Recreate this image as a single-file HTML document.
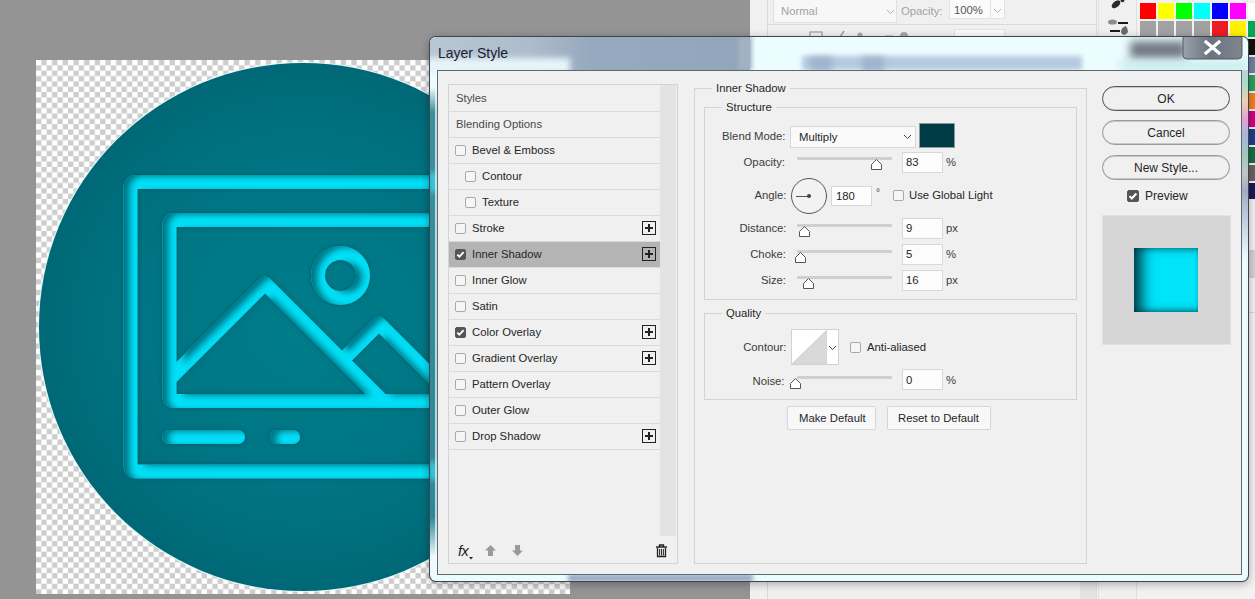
<!DOCTYPE html>
<html><head><meta charset="utf-8"><title>Layer Style</title>
<style>
*{margin:0;padding:0;box-sizing:border-box}
html,body{width:1255px;height:599px;overflow:hidden}
body{background:#949494;font-family:"Liberation Sans",sans-serif;position:relative;color:#333}
.a{position:absolute}
#canvas{left:36px;top:60px;width:534px;height:534px;background-color:#fff;
background-image:conic-gradient(#cdcdcd 25%,#fff 25% 50%,#cdcdcd 50% 75%,#fff 75%);
background-size:10.69px 10.69px;background-position:0 0}
.t{position:absolute;white-space:nowrap;font-size:12px;line-height:14px}
.lt{font-size:11.3px;line-height:16px}
.cbx{width:11px;height:11px;border:1px solid #a9a9a9;border-radius:2px;background:#f6f6f6}
.cbx.on{background:#555;border-color:#555}
.cbx svg{position:absolute;left:-1px;top:-1px}
.plus{width:14px;height:14px;border:1px solid #222;background:transparent}
.plus:before{content:"";position:absolute;left:2px;top:5px;width:8px;height:2px;background:#222}
.plus:after{content:"";position:absolute;left:5px;top:2px;width:2px;height:8px;background:#222}
.grp{border:1px solid #d3d3d3}
.hdr{background:#f0f0f0;padding:0 4px;color:#262626}
.ddl{background:#fafafa;border:1px solid #d8d8d8}
.inp{background:#fcfcfc;border:1px solid #d8d8d8}
.trk{height:3px;background:#cfcfcf;border-radius:1px}
.btn{background:#f8f8f8;border:1px solid #d6d6d6;border-radius:2px}
.rbtn{background:#f0f0f0;border:1px solid #9a9a9a;border-radius:13px;box-shadow:inset 0 1px 0 #c8c8c8,inset 0 -1px 0 #c8c8c8}
</style></head><body>
<!-- PS PANELS -->
<div class="a" style="left:750px;top:0;width:505px;height:599px;background:#f0f0f0"></div>
<div class="a" style="left:767px;top:0;width:1px;height:599px;background:#d9d9d9"></div>
<div class="a" style="left:773px;top:-1px;width:124px;height:24px;background:#f7f7f7;border:1px solid #e0e0e0"></div>
<div class="t" style="left:781px;top:4px;font-size:11.3px;line-height:14px;color:#a3a3a3">Normal</div>
<svg class="a" style="left:886px;top:9px" width="9" height="6"><path d="M1 1 L4.5 4.5 L8 1" fill="none" stroke="#b0b0b0" stroke-width="1"/></svg>
<div class="t" style="left:901px;top:4px;font-size:11.3px;line-height:14px;color:#a3a3a3">Opacity:</div>
<div class="a" style="left:949px;top:-1px;width:56px;height:20px;background:#fbfbfb;border:1px solid #e3e3e3"></div>
<div class="a" style="left:990px;top:0;width:1px;height:19px;background:#e3e3e3"></div>
<div class="t" style="left:954px;top:3px;font-size:11.3px;line-height:14px;color:#555">100%</div>
<svg class="a" style="left:993px;top:8px" width="9" height="6"><path d="M1 1 L4.5 4.5 L8 1" fill="none" stroke="#b0b0b0" stroke-width="1"/></svg>
<div class="a" style="left:767px;top:24px;width:330px;height:1px;background:#d9d9d9"></div>
<div class="a" style="left:954px;top:29px;width:51px;height:10px;background:#fbfbfb;border:1px solid #e3e3e3"></div>
<div class="a" style="left:1096px;top:0;width:1px;height:599px;background:#dcdcdc"></div>
<div class="a" style="left:1098px;top:0;width:1px;height:599px;background:#e4e4e4"></div>
<div class="a" style="left:1080px;top:560px;width:16px;height:39px;background:#e4e4e4"></div>
<div class="a" style="left:1136px;top:0;width:1px;height:599px;background:#dedede"></div>
<div class="a" style="left:1138px;top:0;width:1px;height:599px;background:#e2e2e2"></div>
<!-- tool icons -->
<svg class="a" style="left:1105px;top:0" width="30" height="36"><ellipse cx="11" cy="4.3" rx="5" ry="3" transform="rotate(-40 11 4.3)" fill="#2a2a2a"/><circle cx="17.5" cy="0.3" r="2" fill="#2a2a2a"/><ellipse cx="7.5" cy="22" rx="4.5" ry="2.6" fill="#8c8c8c"/><rect x="13" y="22" width="10" height="2" fill="#1a1a1a"/><rect x="5" y="30" width="10" height="2" fill="#1a1a1a"/><path d="M16 31 Q17 27 21 26 Q23 29 23 32 Q21 35 19 35 Q16 34 16 31Z" fill="#6a6a6a"/></svg>
<!-- swatches -->
<div class="a" style="left:1137px;top:0;width:118px;height:599px;background:#f2f2f2"></div>
<div class="a" style="left:1140px;top:3px;width:16px;height:16px;background:#ff0000"></div>
<div class="a" style="left:1158px;top:3px;width:16px;height:16px;background:#ffff00"></div>
<div class="a" style="left:1176px;top:3px;width:16px;height:16px;background:#00ff00"></div>
<div class="a" style="left:1194px;top:3px;width:16px;height:16px;background:#00ffff"></div>
<div class="a" style="left:1212px;top:3px;width:16px;height:16px;background:#0000ff"></div>
<div class="a" style="left:1230px;top:3px;width:16px;height:16px;background:#ff00ff"></div>
<div class="a" style="left:1248px;top:3px;width:16px;height:16px;background:#ffffff"></div>
<div class="a" style="left:1140px;top:21px;width:16px;height:16px;background:#a2a2a2"></div>
<div class="a" style="left:1158px;top:21px;width:16px;height:16px;background:#a2a2a2"></div>
<div class="a" style="left:1176px;top:21px;width:16px;height:16px;background:#a2a2a2"></div>
<div class="a" style="left:1194px;top:21px;width:16px;height:16px;background:#a0a0a0"></div>
<div class="a" style="left:1212px;top:21px;width:16px;height:16px;background:#ed1c24"></div>
<div class="a" style="left:1230px;top:21px;width:16px;height:16px;background:#fff200"></div>
<div class="a" style="left:1248px;top:21px;width:16px;height:16px;background:#00a651"></div>
<div class="a" style="left:1248px;top:39px;width:16px;height:16px;background:#111111"></div>
<div class="a" style="left:1248px;top:57px;width:16px;height:16px;background:#6f80a8"></div>
<div class="a" style="left:1248px;top:75px;width:16px;height:16px;background:#26a060"></div>
<div class="a" style="left:1248px;top:93px;width:16px;height:16px;background:#f08020"></div>
<div class="a" style="left:1248px;top:111px;width:16px;height:16px;background:#d0008a"></div>
<div class="a" style="left:1248px;top:129px;width:16px;height:16px;background:#1b3f86"></div>
<div class="a" style="left:1248px;top:147px;width:16px;height:16px;background:#107040"></div>
<div class="a" style="left:1248px;top:165px;width:16px;height:16px;background:#6a6460"></div>
<div class="a" style="left:1248px;top:183px;width:16px;height:16px;background:#1a1a5a"></div>
<div class="a" style="left:1248px;top:250px;width:8px;height:28px;background:#d2d2d2"></div>
<div class="a" style="left:1248px;top:312px;width:8px;height:1px;background:#d8d8d8"></div>
<svg class="a" style="left:805px;top:28px" width="110" height="9"><rect x="5" y="4" width="12" height="5" fill="none" stroke="#9a9a9a" stroke-width="1.2"/><path d="M35 9 L39 3" stroke="#a0a0a0" stroke-width="1.5"/><circle cx="55" cy="7" r="2.5" fill="#a5a5a5"/><path d="M80 8 H88" stroke="#b0b0b0" stroke-width="1"/><circle cx="99" cy="8" r="4" fill="#a8a8a8"/></svg>

<svg class="a" style="left:36px;top:60px" width="534" height="534"><defs><pattern id="chk" width="10.69" height="10.69" patternUnits="userSpaceOnUse"><rect width="10.69" height="10.69" fill="#fff"/><rect x="5.345" y="0" width="5.345" height="5.345" fill="#cdcdcd"/><rect x="0" y="5.345" width="5.345" height="5.345" fill="#cdcdcd"/></pattern></defs><rect width="534" height="534" fill="url(#chk)"/></svg>
<svg class="a" style="left:0;top:0" width="1255" height="599" viewBox="0 0 1255 599">
<defs>
<radialGradient id="cg" cx="303" cy="327" r="264" gradientUnits="userSpaceOnUse">
<stop offset="0" stop-color="#007c8a"/><stop offset="0.55" stop-color="#007684"/><stop offset="0.85" stop-color="#006e7c"/><stop offset="1" stop-color="#006775"/>
</radialGradient>
<filter id="emb" filterUnits="userSpaceOnUse" x="80" y="130" width="420" height="380">
<feComponentTransfer in="SourceAlpha" result="inv"><feFuncA type="table" tableValues="1 0"/></feComponentTransfer>
<feOffset in="inv" dx="6.5" dy="1.5" result="invo"/>
<feGaussianBlur in="invo" stdDeviation="3" result="invb"/>
<feFlood flood-color="#03505e" flood-opacity="0.85"/>
<feComposite in2="invb" operator="in" result="shcol"/>
<feComposite in="shcol" in2="SourceAlpha" operator="in" result="innersh"/>
<feGaussianBlur in="SourceAlpha" stdDeviation="2.2" result="halo"/>
<feFlood flood-color="#004b58" flood-opacity="0.75"/>
<feComposite in2="halo" operator="in" result="halocol"/>
<feMerge><feMergeNode in="halocol"/><feMergeNode in="SourceGraphic"/><feMergeNode in="innersh"/></feMerge>
</filter>
</defs>
<circle cx="303" cy="327" r="264.3" fill="none" stroke="#dffcff" stroke-width="1.6" opacity="0.8"/>
<circle cx="303" cy="327" r="264" fill="url(#cg)"/>
<g fill="none" stroke="#00e0f8" stroke-width="14" stroke-linecap="round" stroke-linejoin="round" filter="url(#emb)">
<rect x="130.5" y="182" width="344.5" height="289.5" rx="5"/>
<rect x="169.5" y="220" width="267" height="181" rx="4"/>
<circle cx="340.5" cy="275.5" r="22.5"/>
<polyline points="169.5,379 265,283.5 382.5,401"/>
<polyline points="342,360.5 379,323.5 456.5,401"/>
<line x1="169" y1="437" x2="238" y2="437"/>
<line x1="277" y1="437" x2="293" y2="437"/>
</g>
</svg>

<!-- DIALOG -->
<div class="a" style="left:429px;top:36px;width:820px;height:546px;border-radius:7px;background:#3d4650;box-shadow:0 2px 8px rgba(0,0,0,0.3)"></div>
<div class="a" style="left:430px;top:37px;width:818px;height:544px;border-radius:6px;overflow:hidden;background:#eefbfe">
  <!-- title bar blurred backdrop (coords relative to 430,37) -->
  <div class="a" style="left:0;top:0;width:818px;height:33px;background:#ecfdff"></div>
  <div class="a" style="left:0;top:0;width:320px;height:33px;background:linear-gradient(90deg,#b9c6d3 0,#adbccb 100px,#97a9be 160px,#93a5bb 320px)"></div>
  <div class="a" style="left:-10px;top:21px;width:150px;height:16px;background:#e6f5fa;filter:blur(3px)"></div>
  <div class="a" style="left:308px;top:0;width:14px;height:33px;background:#a2b2c4;filter:blur(2px)"></div>
  <div class="a" style="left:372px;top:19px;width:280px;height:14px;background:#b6c9e0;filter:blur(2.5px)"></div>
  <div class="a" style="left:380px;top:20px;width:22px;height:14px;background:#9fb3cb;filter:blur(3px)"></div>
  <div class="a" style="left:432px;top:20px;width:22px;height:14px;background:#9fb3cb;filter:blur(3px)"></div>
  <div class="a" style="left:700px;top:4px;width:56px;height:20px;background:#747c88;filter:blur(4px)"></div>
  <div class="a" style="left:690px;top:22px;width:128px;height:14px;background:#cfeef0;filter:blur(4px)"></div>
  <!-- left frame strip showing teal backdrop -->
  <div class="a" style="left:0;top:50px;width:7px;height:470px;background:linear-gradient(180deg,rgba(0,110,125,0) 0,#3e8e9c 25px,#2f8797 430px,rgba(0,110,125,0) 470px)"></div>
  <div class="a" style="left:0;top:135px;width:7px;height:20px;background:#3fd8ee;filter:blur(3px)"></div>
  <div class="a" style="left:0;top:425px;width:7px;height:18px;background:#3fd8ee;filter:blur(3px)"></div>
  <div class="a" style="left:5px;top:33px;width:2px;height:505px;background:rgba(240,252,255,0.7)"></div>
  <!-- bottom frame strip -->
  <div class="a" style="left:138px;top:537px;width:185px;height:8px;background:#9aabc0;filter:blur(2px)"></div>
  <!-- right frame colorful -->
  <div class="a" style="left:811px;top:33px;width:7px;height:505px;background:linear-gradient(180deg,#8fd0ee 0,#a1a9ab -23px,#c2d0e0 -5px,#a8dbc7 13px,#efd0b0 31px,#e4a3d5 49px,#a4b9d4 67px,#a0cabc 85px,#c0c6c7 103px,#a4acc5 121px,#eefbfe 190px)"></div>
  <!-- close button -->
  <svg class="a" style="left:752px;top:-1px" width="62" height="24"><defs><linearGradient id="cbg" x1="0" x2="1"><stop offset="0" stop-color="#9aa2ac"/><stop offset="0.45" stop-color="#6d7480"/><stop offset="1" stop-color="#7d858f"/></linearGradient></defs><path d="M1 0 V19 Q1 23 5 23 H56 Q60 23 60 19 V0" fill="url(#cbg)" stroke="#535b66" stroke-width="1"/><path d="M24 6 L37 17 M37 6 L24 17" stroke="#fff" stroke-width="3.2" stroke-linecap="square"/></svg>
  <div class="t" style="left:8px;top:7px;font-size:14px;line-height:18px;color:#17202c">Layer Style</div>
</div>
<!-- content -->
<div class="a" style="left:437px;top:70px;width:805px;height:505px;background:#f0f0f0;border:1px solid #5e6a72"></div>

<div class="a" style="left:448px;top:84px;width:230px;height:480px;border:1px solid #d4d4d4;background:#f0f0f0"></div>
<div class="a" style="left:660px;top:85px;width:16px;height:451px;background:#e3e3e3"></div>
<div class="a" style="left:449px;top:111.0px;width:211px;height:1px;background:#dadada"></div>
<div class="t lt" style="left:456px;top:89.5px;color:#4a4a4a">Styles</div>
<div class="a" style="left:449px;top:137.0px;width:211px;height:1px;background:#dadada"></div>
<div class="t lt" style="left:456px;top:115.5px;color:#4a4a4a">Blending Options</div>
<div class="a" style="left:449px;top:163.0px;width:211px;height:1px;background:#dadada"></div>
<div class="a cbx" style="left:455px;top:144.5px"></div>
<div class="t lt" style="left:472px;top:141.5px;color:#262626">Bevel &amp; Emboss</div>
<div class="a" style="left:449px;top:189.0px;width:211px;height:1px;background:#dadada"></div>
<div class="a cbx" style="left:465px;top:170.5px"></div>
<div class="t lt" style="left:482px;top:167.5px;color:#262626">Contour</div>
<div class="a" style="left:449px;top:215.0px;width:211px;height:1px;background:#dadada"></div>
<div class="a cbx" style="left:465px;top:196.5px"></div>
<div class="t lt" style="left:482px;top:193.5px;color:#262626">Texture</div>
<div class="a" style="left:449px;top:241.0px;width:211px;height:1px;background:#dadada"></div>
<div class="a cbx" style="left:455px;top:222.5px"></div>
<div class="t lt" style="left:472px;top:219.5px;color:#262626">Stroke</div>
<div class="a plus" style="left:642px;top:221.0px"></div>
<div class="a" style="left:449px;top:241.5px;width:211px;height:26px;background:#b4b4b4"></div>
<div class="a" style="left:449px;top:267.0px;width:211px;height:1px;background:#dadada"></div>
<div class="a cbx on" style="left:455px;top:248.5px"><svg width="11" height="11" viewBox="0 0 11 11"><path d="M2.3 5.6 L4.4 7.7 L8.6 3.2" fill="none" stroke="#fff" stroke-width="1.9"/></svg></div>
<div class="t lt" style="left:472px;top:245.5px;color:#262626">Inner Shadow</div>
<div class="a plus" style="left:642px;top:247.0px"></div>
<div class="a" style="left:449px;top:293.0px;width:211px;height:1px;background:#dadada"></div>
<div class="a cbx" style="left:455px;top:274.5px"></div>
<div class="t lt" style="left:472px;top:271.5px;color:#262626">Inner Glow</div>
<div class="a" style="left:449px;top:319.0px;width:211px;height:1px;background:#dadada"></div>
<div class="a cbx" style="left:455px;top:300.5px"></div>
<div class="t lt" style="left:472px;top:297.5px;color:#262626">Satin</div>
<div class="a" style="left:449px;top:345.0px;width:211px;height:1px;background:#dadada"></div>
<div class="a cbx on" style="left:455px;top:326.5px"><svg width="11" height="11" viewBox="0 0 11 11"><path d="M2.3 5.6 L4.4 7.7 L8.6 3.2" fill="none" stroke="#fff" stroke-width="1.9"/></svg></div>
<div class="t lt" style="left:472px;top:323.5px;color:#262626">Color Overlay</div>
<div class="a plus" style="left:642px;top:325.0px"></div>
<div class="a" style="left:449px;top:371.0px;width:211px;height:1px;background:#dadada"></div>
<div class="a cbx" style="left:455px;top:352.5px"></div>
<div class="t lt" style="left:472px;top:349.5px;color:#262626">Gradient Overlay</div>
<div class="a plus" style="left:642px;top:351.0px"></div>
<div class="a" style="left:449px;top:397.0px;width:211px;height:1px;background:#dadada"></div>
<div class="a cbx" style="left:455px;top:378.5px"></div>
<div class="t lt" style="left:472px;top:375.5px;color:#262626">Pattern Overlay</div>
<div class="a" style="left:449px;top:423.0px;width:211px;height:1px;background:#dadada"></div>
<div class="a cbx" style="left:455px;top:404.5px"></div>
<div class="t lt" style="left:472px;top:401.5px;color:#262626">Outer Glow</div>
<div class="a" style="left:449px;top:449.0px;width:211px;height:1px;background:#dadada"></div>
<div class="a cbx" style="left:455px;top:430.5px"></div>
<div class="t lt" style="left:472px;top:427.5px;color:#262626">Drop Shadow</div>
<div class="a plus" style="left:642px;top:429.0px"></div>
<!-- settings groups -->
<div class="a grp" style="left:694px;top:88px;width:393px;height:476px"></div>
<div class="t lt hdr" style="left:712px;top:80px">Inner Shadow</div>
<div class="a grp" style="left:704px;top:107px;width:373px;height:193px"></div>
<div class="t lt hdr" style="left:722px;top:99px">Structure</div>
<!-- blend mode -->
<div class="t lt" style="left:685.5px;width:100px;text-align:right;top:128px;color:#3c3c3c">Blend Mode:</div>
<div class="a ddl" style="left:790px;top:126px;width:126px;height:22px"></div>
<div class="t lt" style="left:799px;top:129px;color:#262626">Multiply</div>
<svg class="a" style="left:903px;top:134px" width="9" height="6"><path d="M1 1 L4.5 4.5 L8 1" fill="none" stroke="#444" stroke-width="1"/></svg>
<div class="a" style="left:919px;top:123px;width:36px;height:25px;background:#003c46;border:1px solid #8a9a9c"></div>
<!-- opacity -->
<div class="t lt" style="left:685px;width:100px;text-align:right;top:154px;color:#3c3c3c">Opacity:</div>
<div class="a trk" style="left:797px;top:157px;width:95px"></div>
<svg class="a thumb" style="left:870px;top:158px" width="13" height="13"><path d="M6.5 1.5 L11.5 6.5 L11.5 11.5 L1.5 11.5 L1.5 6.5 Z" fill="#fff" stroke="#555" stroke-width="1" stroke-linejoin="round"/></svg>
<div class="a inp" style="left:902px;top:152px;width:41px;height:21px"></div>
<div class="t lt" style="left:906px;top:154px;color:#262626">83</div>
<div class="t lt" style="left:946px;top:154px;color:#3c3c3c">%</div>
<!-- angle -->
<div class="t lt" style="left:686.5px;width:100px;text-align:right;top:187px;color:#3c3c3c">Angle:</div>
<div class="a" style="left:791px;top:178px;width:36px;height:36px;border-radius:50%;border:1px solid #555;background:#f2f2f2"></div>
<div class="a" style="left:796px;top:195.5px;width:13px;height:1px;background:#555"></div>
<div class="a" style="left:807px;top:194px;width:4px;height:4px;border-radius:50%;background:#444"></div>
<div class="a inp" style="left:831px;top:186px;width:41px;height:20px"></div>
<div class="t lt" style="left:836px;top:188px;color:#262626">180</div>
<div class="t" style="left:876px;top:186px;font-size:10px;color:#444">&#176;</div>
<div class="a cbx" style="left:893px;top:190px"></div>
<div class="t lt" style="left:909px;top:187px;color:#262626">Use Global Light</div>
<!-- distance -->
<div class="t lt" style="left:686.5px;width:100px;text-align:right;top:220px;color:#3c3c3c">Distance:</div>
<div class="a trk" style="left:797px;top:224px;width:95px"></div>
<svg class="a thumb" style="left:798px;top:225px" width="13" height="13"><path d="M6.5 1.5 L11.5 6.5 L11.5 11.5 L1.5 11.5 L1.5 6.5 Z" fill="#fff" stroke="#555" stroke-width="1" stroke-linejoin="round"/></svg>
<div class="a inp" style="left:902px;top:218px;width:41px;height:21px"></div>
<div class="t lt" style="left:906px;top:220px;color:#262626">9</div>
<div class="t lt" style="left:946px;top:220px;color:#3c3c3c">px</div>
<!-- choke -->
<div class="t lt" style="left:686px;width:100px;text-align:right;top:246px;color:#3c3c3c">Choke:</div>
<div class="a trk" style="left:797px;top:250px;width:95px"></div>
<svg class="a thumb" style="left:794px;top:251px" width="13" height="13"><path d="M6.5 1.5 L11.5 6.5 L11.5 11.5 L1.5 11.5 L1.5 6.5 Z" fill="#fff" stroke="#555" stroke-width="1" stroke-linejoin="round"/></svg>
<div class="a inp" style="left:902px;top:244px;width:41px;height:21px"></div>
<div class="t lt" style="left:906px;top:246px;color:#262626">5</div>
<div class="t lt" style="left:946px;top:246px;color:#3c3c3c">%</div>
<!-- size -->
<div class="t lt" style="left:686px;width:100px;text-align:right;top:272px;color:#3c3c3c">Size:</div>
<div class="a trk" style="left:797px;top:276px;width:95px"></div>
<svg class="a thumb" style="left:802px;top:277px" width="13" height="13"><path d="M6.5 1.5 L11.5 6.5 L11.5 11.5 L1.5 11.5 L1.5 6.5 Z" fill="#fff" stroke="#555" stroke-width="1" stroke-linejoin="round"/></svg>
<div class="a inp" style="left:902px;top:270px;width:41px;height:21px"></div>
<div class="t lt" style="left:906px;top:272px;color:#262626">16</div>
<div class="t lt" style="left:946px;top:272px;color:#3c3c3c">px</div>
<!-- quality -->
<div class="a grp" style="left:704px;top:313px;width:373px;height:87px"></div>
<div class="t lt hdr" style="left:722px;top:305px">Quality</div>
<div class="t lt" style="left:686.5px;width:100px;text-align:right;top:339px;color:#3c3c3c">Contour:</div>
<div class="a" style="left:791px;top:329px;width:48px;height:36px;background:#fff;border:1px solid #d2d2d2"></div>
<svg class="a" style="left:792px;top:330px" width="35" height="34"><path d="M0 34 L35 0 L35 34 Z" fill="#d9d9d9"/><path d="M0 34 L35 0" stroke="#bbb" stroke-width="0.7"/></svg>
<div class="a" style="left:826px;top:330px;width:1px;height:34px;background:#d6d6d6"></div>
<svg class="a" style="left:828px;top:345px" width="9" height="6"><path d="M1 1 L4.5 4.5 L8 1" fill="none" stroke="#444" stroke-width="1"/></svg>
<div class="a cbx" style="left:850px;top:342px"></div>
<div class="t lt" style="left:867px;top:339px;color:#262626">Anti-aliased</div>
<div class="t lt" style="left:684.5px;width:100px;text-align:right;top:373px;color:#3c3c3c">Noise:</div>
<div class="a trk" style="left:797px;top:376px;width:95px"></div>
<svg class="a thumb" style="left:789px;top:377px" width="13" height="13"><path d="M6.5 1.5 L11.5 6.5 L11.5 11.5 L1.5 11.5 L1.5 6.5 Z" fill="#fff" stroke="#555" stroke-width="1" stroke-linejoin="round"/></svg>
<div class="a inp" style="left:902px;top:369px;width:41px;height:21px"></div>
<div class="t lt" style="left:906px;top:372px;color:#262626">0</div>
<div class="t lt" style="left:946px;top:372px;color:#3c3c3c">%</div>
<!-- buttons -->
<div class="a btn" style="left:787px;top:406px;width:89px;height:24px"></div>
<div class="t lt" style="left:799px;top:410px;color:#262626">Make Default</div>
<div class="a btn" style="left:887px;top:406px;width:104px;height:24px"></div>
<div class="t lt" style="left:898px;top:410px;color:#262626">Reset to Default</div>
<!-- right buttons -->
<div class="a rbtn" style="left:1102px;top:86px;width:128px;height:25px;border-color:#555"></div>
<div class="t" style="left:1102px;top:91px;width:128px;text-align:center;font-size:12px;line-height:16px;color:#262626">OK</div>
<div class="a rbtn" style="left:1102px;top:120px;width:128px;height:25px"></div>
<div class="t" style="left:1102px;top:125px;width:128px;text-align:center;font-size:12px;line-height:16px;color:#262626">Cancel</div>
<div class="a rbtn" style="left:1102px;top:155px;width:128px;height:25px"></div>
<div class="t" style="left:1102px;top:160px;width:128px;text-align:center;font-size:12px;line-height:16px;color:#262626">New Style...</div>
<div class="a cbx on" style="left:1127px;top:190px;width:12px;height:12px"><svg width="12" height="12" viewBox="0 0 11 11"><path d="M2.3 5.6 L4.4 7.7 L8.6 3.2" fill="none" stroke="#fff" stroke-width="1.9"/></svg></div>
<div class="t" style="left:1145px;top:188px;font-size:12px;line-height:16px;color:#262626">Preview</div>
<div class="a" style="left:1102px;top:215px;width:129px;height:130px;background:#d6d6d6;border:1px solid #e2e2e2"></div>
<div class="a" style="left:1134px;top:248px;width:64px;height:64px;background:#00e4fa;box-shadow:inset 12px 0 14px -4px rgba(0,40,50,0.9),inset 0 -3px 5px -2px rgba(0,60,70,0.55),inset 0 3px 5px -2px rgba(0,60,70,0.4)"></div>
<!-- bottom icons -->
<div class="t" style="left:458px;top:543px;font-size:14.5px;line-height:16px;font-style:italic;color:#222;letter-spacing:-0.6px">fx</div>
<svg class="a" style="left:469px;top:557px" width="5" height="3"><path d="M0 0 L4 0 L2 2.5Z" fill="#222"/></svg>
<svg class="a" style="left:484px;top:544px" width="13" height="13"><path d="M6.5 1 L12 6.5 L9 6.5 L9 12 L4 12 L4 6.5 L1 6.5 Z" fill="#9a9a9a"/></svg>
<svg class="a" style="left:511px;top:544px" width="13" height="13"><path d="M6.5 12 L12 6.5 L9 6.5 L9 1 L4 1 L4 6.5 L1 6.5 Z" fill="#9a9a9a"/></svg>
<svg class="a" style="left:655px;top:544px" width="13" height="14"><path d="M1 3 H12 M4.5 3 V1 H8.5 V3" fill="none" stroke="#222" stroke-width="1.3"/><path d="M2.5 4 V12.5 H10.5 V4" fill="none" stroke="#222" stroke-width="1.3"/><path d="M4.6 5 V11.5 M6.5 5 V11.5 M8.4 5 V11.5" stroke="#222" stroke-width="1"/></svg>

</body></html>
